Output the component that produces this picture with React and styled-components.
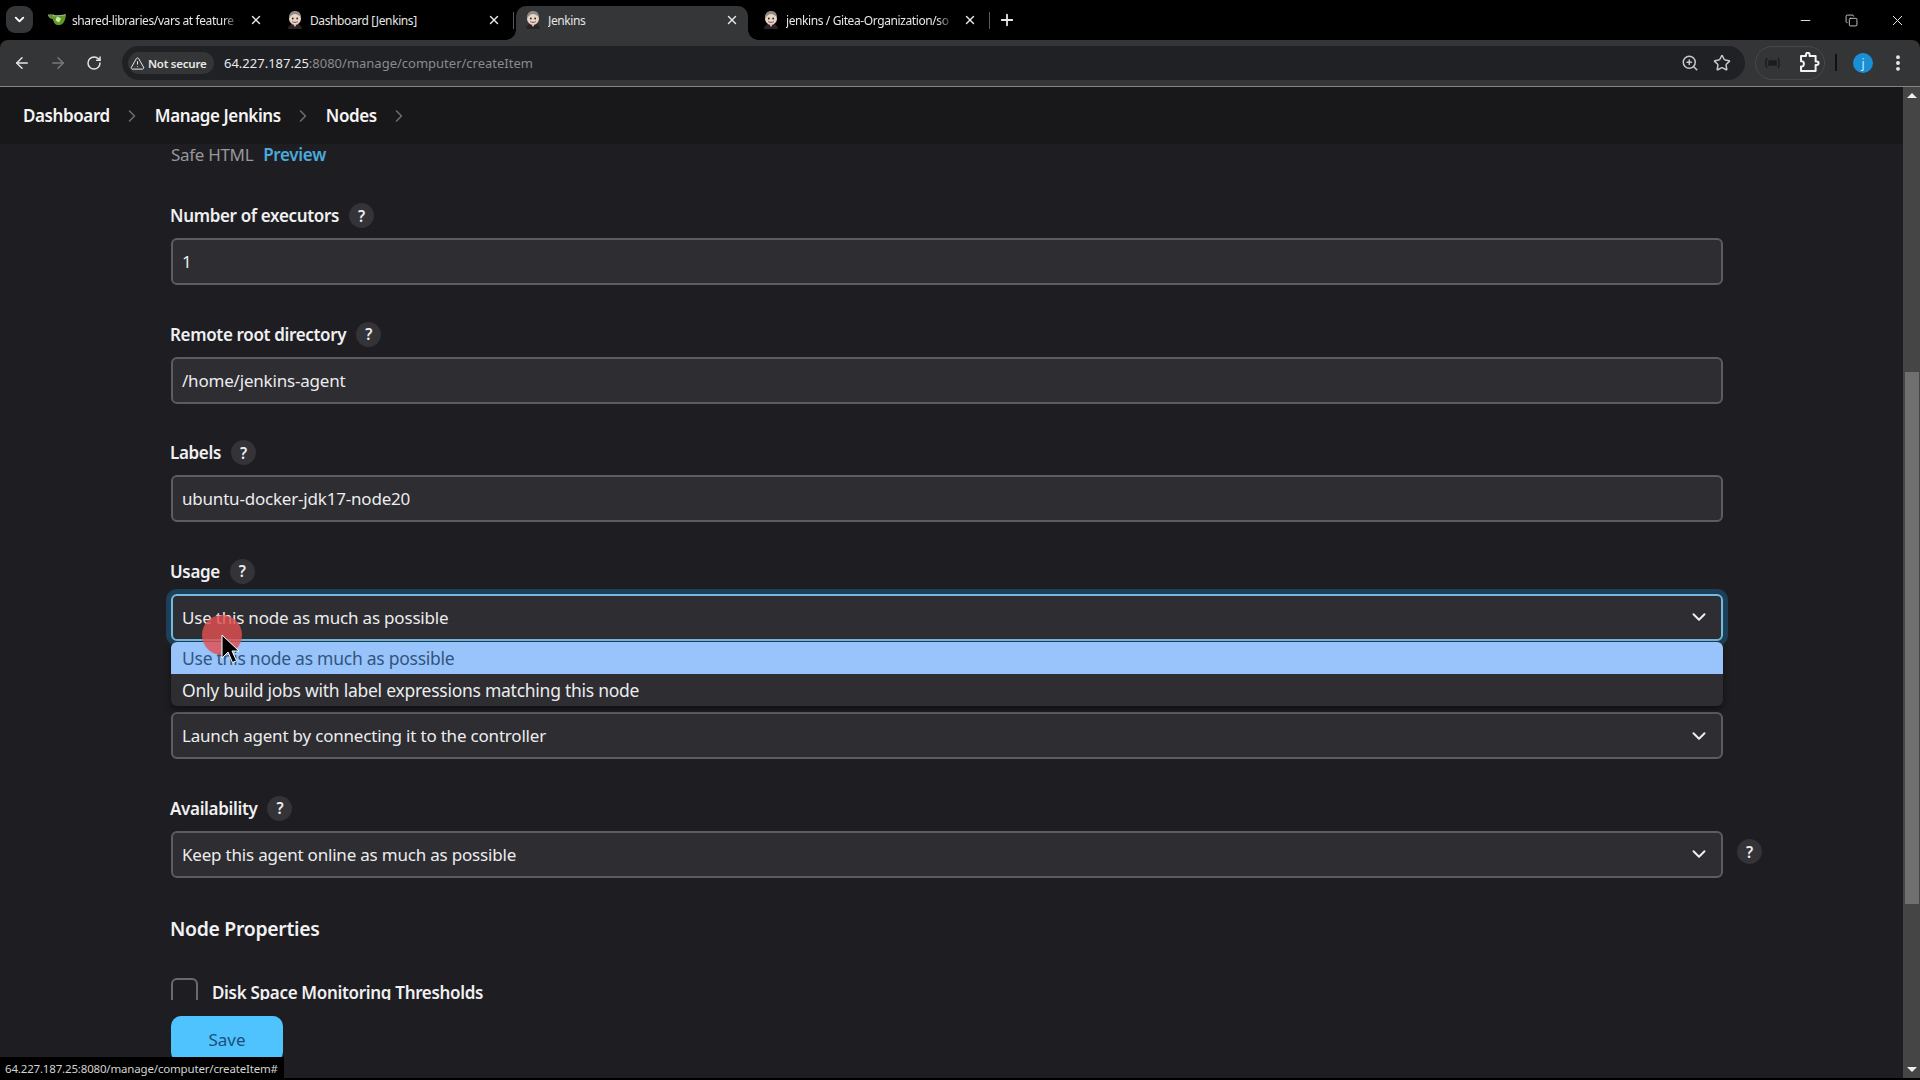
import React from 'react';
import styled, { createGlobalStyle } from 'styled-components';
import { ArrowLeft, ArrowRight, RotateCw, ChevronDown, ChevronRight, X, Plus, Minus, Star, ZoomIn, EllipsisVertical, TriangleAlert, Copy } from 'lucide-react';

const Global = createGlobalStyle`
  html, body { margin: 0; padding: 0; background: #000; overflow: hidden; }
  * { box-sizing: border-box; }
  body { font-family: "Noto Sans", "Open Sans", "Liberation Sans", sans-serif; color: #e8e8ea; }
`;

const Screen = styled.div`
  position: relative; width: 1920px; height: 1080px; background: #000; overflow: hidden;
  display: flex; flex-direction: column; padding-bottom: 2px;
`;

/* ---------- tab strip ---------- */
const TabStrip = styled.div`height: 40px; flex: none; display: flex; align-items: stretch; padding-left: 6px; background: #000;`;
const TabSearch = styled.div`
  width: 27px; height: 27px; margin: 6px 5px 0 0; border-radius: 9px; background: #353638; color: #fff;
  display: flex; align-items: center; justify-content: center;
`;
const Tab = styled.div`
  position: relative; width: 238px; flex: none; display: flex; align-items: center; padding-left: 10px; color: #e6e6e6;
  ${p => p.$active && `
    &::before { content: ""; position: absolute; left: 2px; width: 232px; top: 6px; bottom: 0; background: #353638; border-radius: 10px 10px 0 0; }
    &::after { content: ""; position: absolute; left: -8px; width: 252px; bottom: 0; height: 10px;
      background: radial-gradient(circle at 0 0, transparent 9.5px, #353638 10px) left bottom / 10px 10px no-repeat,
                  radial-gradient(circle at 100% 0, transparent 9.5px, #353638 10px) right bottom / 10px 10px no-repeat; }
  `}
  ${p => p.$sep && `
    & > i { position: absolute; right: 0; top: 12px; height: 17px; width: 1px; background: #5a5a5a; }
  `}
`;
const TabIcon = styled.svg`position: relative; z-index: 1; width: 18px; height: 18px; flex: none;`;
const TabTitle = styled.span`
  position: relative; z-index: 1; margin-left: 6px; width: 168px; flex: none; font-size: 12px; white-space: nowrap; overflow: hidden;
  letter-spacing: -0.4px;
  ${p => p.$fade && `mask-image: linear-gradient(90deg, #000 90%, transparent 100%);`}
`;
const TabClose = styled.span`
  position: absolute; z-index: 1; left: 211px; top: 13px; width: 14px; height: 14px; color: #e8e8e8; display: flex;
`;
const NewTab = styled.div`width: 34px; color: #e8e8e8; display: flex; align-items: center; justify-content: center;`;
const WindowControls = styled.div`margin-left: auto; display: flex; align-items: center; color: #e8e8e8;`;
const WindowButton = styled.div`width: 46px; height: 40px; display: flex; align-items: center; justify-content: center;`;

/* ---------- toolbar ---------- */
const Toolbar = styled.div`
  height: 47px; flex: none; display: flex; align-items: flex-start; padding: 6px 12px 0 4px; background: #343537;
  border-bottom: 1px solid #858585; border-radius: 8px 8px 0 0;
`;
const NavButton = styled.div`
  width: 36px; height: 34px; flex: none; display: flex; align-items: center; justify-content: center;
  color: ${p => (p.$dim ? '#77787a' : '#e6e6e6')};
`;
const Omnibox = styled.div`
  flex: 1; height: 34px; margin-left: 10px; border-radius: 17px; background: #202124; display: flex; align-items: center; padding: 0 14px 0 6px;
`;
const SecurityChip = styled.div`
  width: 86px; height: 22px; flex: none; border-radius: 11px; background: #343537; display: flex; align-items: center; gap: 3px;
  padding-left: 2px; color: #e8e8e8; font-size: 11.5px; font-weight: 600; white-space: nowrap; letter-spacing: -0.25px;
`;
const Url = styled.div`margin-left: 10px; font-size: 13px; color: #e9e9e9; white-space: nowrap;`;
const UrlRest = styled.span`color: #8a8b8d;`;
const OmniIcons = styled.div`margin-left: auto; display: flex; align-items: center; gap: 14px; color: #c8c8c8;`;
const ExtensionPill = styled.div`
  width: 70px; height: 34px; flex: none; margin-left: 10px; border: 1px solid #47484a; border-radius: 17px;
  display: flex; align-items: center; padding-left: 8px; gap: 18px;
`;
const ToolbarDivider = styled.div`width: 2px; height: 17px; margin: 8px 0 0 10px; background: #111; flex: none;`;
const Avatar = styled.div`
  width: 20px; height: 20px; margin: 7px 0 0 16px; border-radius: 50%; background: #1a8fd6; color: #cfeaff; font-size: 12px; flex: none;
  display: flex; align-items: center; justify-content: center;
`;
const Kebab = styled.div`margin: 6px 0 0 15px; color: #eee; height: 22px; display: flex; align-items: center;`;

/* ---------- page ---------- */
const Page = styled.div`flex: 1; min-height: 0; display: flex; background: #1e1e22;`;
const Main = styled.div`flex: 1; min-width: 0; display: flex; flex-direction: column;`;
const Breadcrumb = styled.nav`
  height: 57px; flex: none; background: #18181a; display: flex; align-items: center; padding-left: 23px; gap: 12.5px;
  font-size: 17px; font-weight: 600; color: #f4f4f4; letter-spacing: -0.4px;
`;
const Crumbs = styled.span`color: #6e6e70; display: flex;`;
const Content = styled.div`flex: 1; min-height: 0; overflow: hidden; padding-left: 171px;`;
const FormColumn = styled.div`width: 1552px;`;
const SafeLine = styled.div`
  height: 22px; line-height: 22px; font-size: 17px; color: #97979b; display: flex; gap: 10px; margin-bottom: 37px; letter-spacing: -0.32px;
`;
const PreviewLink = styled.span`color: #4ba9dc; font-weight: 600;`;
const Field = styled.div`margin-bottom: 36.5px;`;
const LastField = styled.div`margin-bottom: 0;`;
const LabelRow = styled.div`
  height: 25px; display: flex; align-items: center; gap: 10px; margin: 0 0 10px -1px; font-size: 17px; font-weight: 600; color: #f0f0f2; letter-spacing: -0.34px;
`;
const HelpButton = styled.span`
  width: 25px; height: 25px; flex: none; border-radius: 50%; background: #333338; color: #ededf0; font-size: 15.5px; font-weight: 600;
  display: flex; align-items: center; justify-content: center; letter-spacing: 0;
`;
const Control = styled.div`
  height: 47px; border: 2px solid ${p => (p.$focus ? '#74bade' : '#5c5c61')}; border-radius: 6px; background: #2d2d32; flex: 0 0 1552px;
  display: flex; align-items: center; justify-content: space-between; padding: 0 10px 0 9px; font-size: 17px; color: #ececee; letter-spacing: -0.2px;
  ${p => p.$focus && `box-shadow: 0 0 0 5px #1b4058;`}
`;
const Chevron = styled.span`display: flex; color: #eee; margin-right: 1px;`;
const SelectWrap = styled.div`position: relative;`;
const Options = styled.div`
  position: absolute; z-index: 3; left: 0; right: 0; top: 48.500px; height: 64px; border-radius: 6px; background: #2d2d32; overflow: hidden;
  box-shadow: 0 3px 6px rgba(0,0,0,.5);
`;
const Option = styled.div`
  height: 32px; display: flex; align-items: center; padding-left: 11px; font-size: 17.5px; letter-spacing: -0.26px;
  background: ${p => (p.$selected ? '#99c4fb' : 'transparent')}; color: ${p => (p.$selected ? '#31557f' : '#ececee')};
`;
const ControlRow = styled.div`display: flex; align-items: center; gap: 14px; width: 1592px; margin-top: 2px;`;
const SideHelp = styled(HelpButton)`margin-bottom: 5px;`;
const SectionTitle = styled.h2`
  margin: 36px 0 0 -1px; height: 30px; line-height: 30px; font-size: 19.4px; font-weight: 600; color: #f2f2f4; letter-spacing: -0.3px;
`;
const CheckRow = styled.div`display: flex; align-items: flex-start; gap: 14px; margin-top: 34px; font-size: 17px; font-weight: 600; color: #f0f0f2; letter-spacing: -0.32px;`;
const CheckBox = styled.span`width: 27px; height: 27px; flex: none; border: 2px solid #6a6a6e; border-radius: 6px;`;
const CheckText = styled.span`line-height: 27px; padding-top: 1px;`;
const BottomBar = styled.div`height: 78px; flex: none; padding: 16px 0 0 171px; background: #1e1e22;`;
const SaveButton = styled.div`
  width: 112px; height: 46px; border-radius: 10px; background: #4fc3fe; color: #1d4f78; font-size: 17px;
  display: flex; align-items: center; justify-content: center;
`;

/* ---------- scrollbar ---------- */
const ScrollTrack = styled.div`width: 17px; flex: none; background: #454545; display: flex; flex-direction: column; align-items: center; padding-top: 6px;`;
const ScrollArrow = styled.span`
  width: 0; height: 0; border-left: 5px solid transparent; border-right: 5px solid transparent; flex: none;
  ${p => (p.$down ? 'border-top: 5px solid #eee; margin-top: auto; margin-bottom: 6px;' : 'border-bottom: 5px solid #eee;')}
`;
const ScrollThumb = styled.span`width: 14px; height: 532px; margin-top: 274px; background: #6f6f6f; flex: none;`;

/* ---------- overlays ---------- */
const StatusBubble = styled.div`
  position: absolute; z-index: 5; left: 0; bottom: 0; width: 284px; height: 23px; background: #000; color: #d2d2d2; font-size: 11.5px;
  display: flex; align-items: center; padding-left: 5px; white-space: nowrap; letter-spacing: -0.17px;
`;
const ClickHalo = styled.div`
  position: absolute; z-index: 6; left: 202px; top: 615px; width: 40px; height: 40px; border-radius: 50%; background: rgba(224, 80, 80, .82);
`;
const Cursor = styled.svg`position: absolute; z-index: 7; left: 221px; top: 634px; width: 18px; height: 30px;`;

const Butler = () => (
  <TabIcon viewBox="0 0 18 18">
    <path d="M2 18c.4-3.600 3-5.500 7-5.500s6.600 1.900 7 5.500z" fill="#2c2226" />
    <ellipse cx="9" cy="7.500" rx="6" ry="6.500" fill="#e9d5c6" />
    <path d="M3 7.500C2.500 2.600 5.500 0 9 0s6 2 6 6.500C13.400 4.200 10.800 3 9 3 7 3 4.400 4.800 3 7.500z" fill="#8f8a86" />
    <circle cx="6.800" cy="7.500" r=".9" fill="#222" /><circle cx="11.200" cy="7.500" r=".9" fill="#222" />
    <path d="M6.200 10.600c1.700 1.100 3.900 1.100 5.600 0" stroke="#8a4b40" strokeWidth="1" fill="none" />
    <path d="M8 14l1 2 1-2z" fill="#eee" />
  </TabIcon>
);
const Gitea = () => (
  <TabIcon viewBox="0 0 18 18">
    <path d="M0 4c2-.5 5-.3 6 0l-.5 3.500c-2 .5-4.500-.8-5.500-3.500z" fill="#5d8f3e" stroke="#9cc57a" strokeWidth=".6" />
    <path d="M4 4.500c4 .4 9 .4 14-1-.4 5-2.400 10.500-6.500 10.500h-2C6.500 14 4.600 9 4 4.500z" fill="#609926" />
    <path d="M9 5.500l4 2-2 4-3.500-2z" fill="#cfe9b5" />
    <path d="M5 4.600c4 .3 8 .2 12.500-1" stroke="#d8efc0" strokeWidth=".7" fill="none" />
  </TabIcon>
);
const Puzzle = () => (
  <svg width="21" height="22" viewBox="0 0 21 22" fill="none" stroke="#f2f2f2" strokeWidth="2" strokeLinejoin="round">
    <path d="M2 4h5V2.500a1.800 1.800 0 0 1 3.600 0V4h6v5.500h1.200a1.800 1.800 0 0 1 0 3.600h-1.200V19H2v-4.500c2.200.4 2.900-1.200 2.900-2.700S4 8.800 2 9.200z" />
  </svg>
);
const SideEffectIcon = () => (
  <svg width="17" height="12" viewBox="0 0 17 12" fill="none" stroke="#1d1d1d" strokeWidth="1.500">
    <path d="M3 1C1.500 3.500 1.500 8.500 3 11M14 1c1.500 2.500 1.500 7.500 0 10" />
    <rect x="5" y="4" width="7" height="4" fill="#1d1d1d" />
  </svg>
);

const Help = () => <HelpButton>?</HelpButton>;
const Down = () => <Chevron><ChevronDown size={22} strokeWidth={2.2} /></Chevron>;

const tabs = [
  { title: 'shared-libraries/vars at feature', icon: <Gitea />, fade: true },
  { title: 'Dashboard [Jenkins]', icon: <Butler />, sep: true },
  { title: 'Jenkins', icon: <Butler />, active: true },
  { title: 'jenkins / Gitea-Organization/so', icon: <Butler />, fade: true, sep: true },
];

export default function App() {
  return (
    <Screen>
      <Global />
      <TabStrip>
        <TabSearch><ChevronDown size={15} strokeWidth={3} /></TabSearch>
        {tabs.map(t => (
          <Tab key={t.title} $active={t.active} $sep={t.sep}>
            {t.icon}
            <TabTitle $fade={t.fade}>{t.title}</TabTitle>
            <TabClose><X size={14} strokeWidth={2.4} /></TabClose>
            {t.sep && <i />}
          </Tab>
        ))}
        <NewTab><Plus size={18} strokeWidth={2.4} /></NewTab>
        <WindowControls>
          <WindowButton><Minus size={15} strokeWidth={1.5} /></WindowButton>
          <WindowButton><Copy size={13} strokeWidth={1.5} /></WindowButton>
          <WindowButton><X size={17} strokeWidth={1.4} /></WindowButton>
        </WindowControls>
      </TabStrip>
      <Toolbar>
        <NavButton><ArrowLeft size={18} strokeWidth={2} /></NavButton>
        <NavButton $dim><ArrowRight size={18} strokeWidth={2} /></NavButton>
        <NavButton><RotateCw size={16} strokeWidth={2.2} /></NavButton>
        <Omnibox>
          <SecurityChip><TriangleAlert size={15} strokeWidth={1.6} />Not secure</SecurityChip>
          <Url>64.227.187.25<UrlRest>:8080/manage/computer/createItem</UrlRest></Url>
          <OmniIcons>
            <ZoomIn size={18} strokeWidth={2} />
            <Star size={18} strokeWidth={2} />
          </OmniIcons>
        </Omnibox>
        <ExtensionPill><SideEffectIcon /><Puzzle /></ExtensionPill>
        <ToolbarDivider />
        <Avatar>j</Avatar>
        <Kebab><EllipsisVertical size={20} strokeWidth={2.6} /></Kebab>
      </Toolbar>
      <Page>
        <Main>
          <Breadcrumb>
            Dashboard<Crumbs><ChevronRight size={20} strokeWidth={1.8} /></Crumbs>
            Manage Jenkins<Crumbs><ChevronRight size={20} strokeWidth={1.8} /></Crumbs>
            Nodes<Crumbs><ChevronRight size={20} strokeWidth={1.8} /></Crumbs>
          </Breadcrumb>
          <Content>
            <FormColumn>
              <SafeLine>Safe HTML <PreviewLink>Preview</PreviewLink></SafeLine>
              <Field>
                <LabelRow>Number of executors <Help /></LabelRow>
                <Control>1</Control>
              </Field>
              <Field>
                <LabelRow>Remote root directory <Help /></LabelRow>
                <Control>/home/jenkins-agent</Control>
              </Field>
              <Field>
                <LabelRow>Labels <Help /></LabelRow>
                <Control>ubuntu-docker-jdk17-node20</Control>
              </Field>
              <Field>
                <LabelRow>Usage <Help /></LabelRow>
                <SelectWrap>
                  <Control $focus>Use this node as much as possible<Down /></Control>
                  <Options>
                    <Option $selected>Use this node as much as possible</Option>
                    <Option>Only build jobs with label expressions matching this node</Option>
                  </Options>
                </SelectWrap>
              </Field>
              <Field>
                <LabelRow />
                <Control>Launch agent by connecting it to the controller<Down /></Control>
              </Field>
              <LastField>
                <LabelRow>Availability <Help /></LabelRow>
                <ControlRow>
                  <Control>Keep this agent online as much as possible<Down /></Control>
                  <SideHelp>?</SideHelp>
                </ControlRow>
              </LastField>
              <SectionTitle>Node Properties</SectionTitle>
              <CheckRow><CheckBox /><CheckText>Disk Space Monitoring Thresholds</CheckText></CheckRow>
            </FormColumn>
          </Content>
          <BottomBar><SaveButton>Save</SaveButton></BottomBar>
        </Main>
        <ScrollTrack>
          <ScrollArrow />
          <ScrollThumb />
          <ScrollArrow $down />
        </ScrollTrack>
      </Page>
      <StatusBubble>64.227.187.25:8080/manage/computer/createItem#</StatusBubble>
      <ClickHalo />
      <Cursor viewBox="0 0 18 30">
        <path d="M1 1v23l6-6 4.500 10.500 4-1.700L11 17h7z" fill="#000" stroke="#fff" strokeWidth="1" />
      </Cursor>
    </Screen>
  );
}
